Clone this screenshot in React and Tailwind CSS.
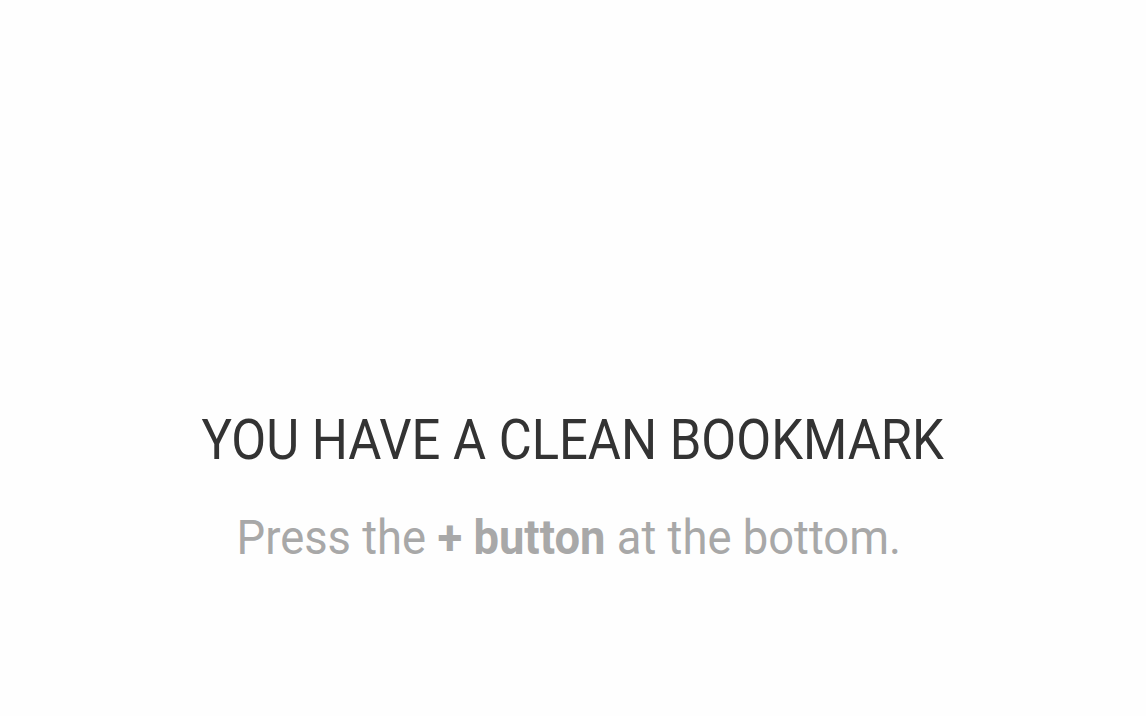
export default function App() {
  return (
    <div className="w-[1146px] h-[716px] bg-[#fefefe] flex flex-col items-center" style={{ fontFamily: "Roboto, sans-serif" }}>
      <div className="h-[404px]" />
      <h1 className="text-[56px] leading-[72px] text-[#333333] font-normal whitespace-nowrap scale-x-[0.906]">YOU HAVE A CLEAN BOOKMARK</h1>
      <p className="mt-[30px] text-[49px] leading-[64px] text-[#a8a8a8] whitespace-nowrap scale-x-[0.926] -translate-x-[4px]">
        Press the <span className="font-bold">+ button</span> at the bottom.
      </p>
    </div>
  );
}
